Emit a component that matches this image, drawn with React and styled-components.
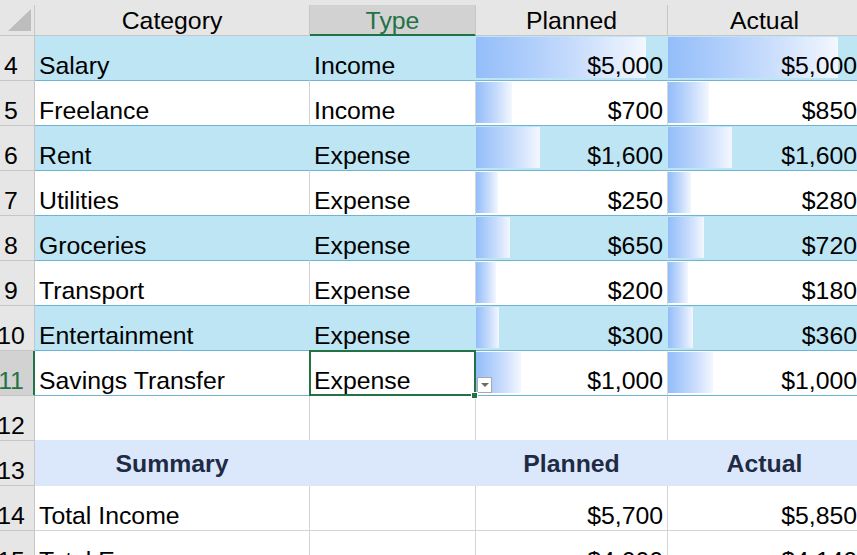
import React from "react";
import styled, { createGlobalStyle, css } from "styled-components";

const COLS = "35px 275px 166px 192px 194px";
const GREEN = "#217346";

const TONES = {
  band: { fill: "#bee5f3", v: "#bee5f3", h: "#6db5d3" },
  plain: { fill: "#ffffff", v: "#d4d4d4", h: "#6db5d3" },
  grid: { fill: "#ffffff", v: "#d4d4d4", h: "#d4d4d4" },
  gap: { fill: "#ffffff", v: "#d4d4d4", h: "#dbe8fb" },
  summary: { fill: "#dbe8fb", v: "#dbe8fb", h: "#dbe8fb" },
};

const GlobalStyle = createGlobalStyle`
  body {
    margin: 0;
    background: #fff;
    overflow: hidden;
    font-family: "Liberation Sans", Arial, sans-serif;
  }
`;

const Sheet = styled.div`
  width: 857px;
  height: 555px;
  overflow: hidden;
  font-size: 24.8px;
  line-height: 28px;
  color: #000;
`;

const Row = styled.div`
  display: grid;
  grid-template-columns: ${COLS};
  height: 45px;
`;

const HeaderRow = styled(Row)`
  height: 36px;
  padding-top: 5px;
  box-sizing: border-box;
  background: #e6e6e6;
`;

const Corner = styled.div`
  display: flex;
  align-items: flex-end;
  justify-content: flex-end;
  padding: 0 3px 4px 0;
  border-right: 1px solid #c6c6c6;
  border-bottom: 1px solid #c6c6c6;
`;

const ColHead = styled.div`
  display: flex;
  align-items: center;
  justify-content: center;
  padding-top: 1px;
  background: ${(p) => (p.$active ? "#d2d2d2" : "#e6e6e6")};
  color: ${(p) => (p.$active ? GREEN : "#000")};
  border-right: 1px solid #c6c6c6;
  border-bottom: 1px solid ${(p) => (p.$active ? GREEN : "#c6c6c6")};
  white-space: nowrap;
  ${(p) =>
    p.$active &&
    css`
      box-shadow: inset 0 -1px 0 ${GREEN};
    `}
`;

const RowHead = styled.div`
  display: flex;
  align-items: flex-end;
  justify-content: center;
  padding-right: 12px;
  background: ${(p) => (p.$active ? "#d2d2d2" : "#e6e6e6")};
  color: ${(p) => (p.$active ? GREEN : "#000")};
  border-right: 1px solid ${(p) => (p.$active ? GREEN : "#c6c6c6")};
  border-bottom: 1px solid #c6c6c6;
  white-space: nowrap;
  ${(p) =>
    p.$active &&
    css`
      box-shadow: inset -1px 0 0 ${GREEN};
    `}
`;

const barLayer = (w) =>
  w ? `linear-gradient(90deg, #93bdfa 0%, #c9ddfc 60%, #f3f7fe 100%) 0 1px / ${w}px 41px no-repeat, ` : "";

const Cell = styled.div`
  display: flex;
  align-items: flex-end;
  justify-content: ${(p) => (p.$right ? "flex-end" : "flex-start")};
  padding: 0 4px;
  white-space: nowrap;
  background: ${(p) => barLayer(p.$bar) + TONES[p.$tone].fill};
  border-right: 1px solid ${(p) => TONES[p.$tone].v};
  border-bottom: 1px solid ${(p) => TONES[p.$tone].h};
`;

const SummaryCell = styled(Cell)`
  align-items: center;
  justify-content: center;
  padding-top: 1px;
  font-weight: bold;
  color: #1f2b45;
`;

const SelectedCell = styled(Cell)`
  position: relative;

  &::after {
    content: "";
    position: absolute;
    top: -1px;
    left: -1px;
    right: -1px;
    bottom: -1px;
    border: 2px solid ${GREEN};
    z-index: 1;
    pointer-events: none;
  }
`;

const FillHandle = styled.span`
  position: absolute;
  right: -2px;
  bottom: -3px;
  width: 5px;
  height: 5px;
  background: ${GREEN};
  box-shadow: 0 0 0 1px #fff;
  z-index: 2;
`;

const DropButton = styled.span`
  position: absolute;
  left: 167px;
  top: 26px;
  width: 15px;
  height: 16px;
  box-sizing: border-box;
  border: 1px solid #a9a9a9;
  background: #fff;
  display: flex;
  align-items: center;
  justify-content: center;
  z-index: 2;

  &::before {
    content: "";
    border-left: 4px solid transparent;
    border-right: 4px solid transparent;
    border-top: 4px solid #6b6b6b;
  }
`;

const ITEMS = [
  { n: 4, cat: "Salary", type: "Income", plan: 5000, act: 5000 },
  { n: 5, cat: "Freelance", type: "Income", plan: 700, act: 850 },
  { n: 6, cat: "Rent", type: "Expense", plan: 1600, act: 1600 },
  { n: 7, cat: "Utilities", type: "Expense", plan: 250, act: 280 },
  { n: 8, cat: "Groceries", type: "Expense", plan: 650, act: 720 },
  { n: 9, cat: "Transport", type: "Expense", plan: 200, act: 180 },
  { n: 10, cat: "Entertainment", type: "Expense", plan: 300, act: 360 },
  { n: 11, cat: "Savings Transfer", type: "Expense", plan: 1000, act: 1000 },
];

const money = (v) => "$" + v.toLocaleString("en-US");
const barWidth = (v) => Math.round(14 + v * 0.0312);

function App() {
  return (
    <Sheet>
      <GlobalStyle />
      <HeaderRow>
        <Corner>
          <svg width="23" height="22" viewBox="0 0 23 22">
            <polygon points="23,0 23,22 0,22" fill="#bdbdbd" />
          </svg>
        </Corner>
        <ColHead>Category</ColHead>
        <ColHead $active>Type</ColHead>
        <ColHead>Planned</ColHead>
        <ColHead>Actual</ColHead>
      </HeaderRow>

      {ITEMS.map((it, i) => {
        const tone = i % 2 === 0 ? "band" : "plain";
        const selected = it.n === 11;
        return (
          <Row key={it.n}>
            <RowHead $active={selected}>{it.n}</RowHead>
            <Cell $tone={tone}>{it.cat}</Cell>
            {selected ? (
              <SelectedCell $tone={tone}>
                {it.type}
                <DropButton />
                <FillHandle />
              </SelectedCell>
            ) : (
              <Cell $tone={tone}>{it.type}</Cell>
            )}
            <Cell $tone={tone} $right $bar={barWidth(it.plan)}>
              {money(it.plan)}
            </Cell>
            <Cell $tone={tone} $right $bar={barWidth(it.act)}>
              {money(it.act)}
            </Cell>
          </Row>
        );
      })}

      <Row>
        <RowHead>12</RowHead>
        <Cell $tone="gap" />
        <Cell $tone="gap" />
        <Cell $tone="gap" />
        <Cell $tone="gap" />
      </Row>

      <Row>
        <RowHead>13</RowHead>
        <SummaryCell $tone="summary">Summary</SummaryCell>
        <SummaryCell $tone="summary" />
        <SummaryCell $tone="summary">Planned</SummaryCell>
        <SummaryCell $tone="summary">Actual</SummaryCell>
      </Row>

      <Row>
        <RowHead>14</RowHead>
        <Cell $tone="grid">Total Income</Cell>
        <Cell $tone="grid" />
        <Cell $tone="grid" $right>{money(5700)}</Cell>
        <Cell $tone="grid" $right>{money(5850)}</Cell>
      </Row>

      <Row>
        <RowHead>15</RowHead>
        <Cell $tone="grid">Total Expenses</Cell>
        <Cell $tone="grid" />
        <Cell $tone="grid" $right>{money(4000)}</Cell>
        <Cell $tone="grid" $right>{money(4140)}</Cell>
      </Row>
    </Sheet>
  );
}

export default App;
